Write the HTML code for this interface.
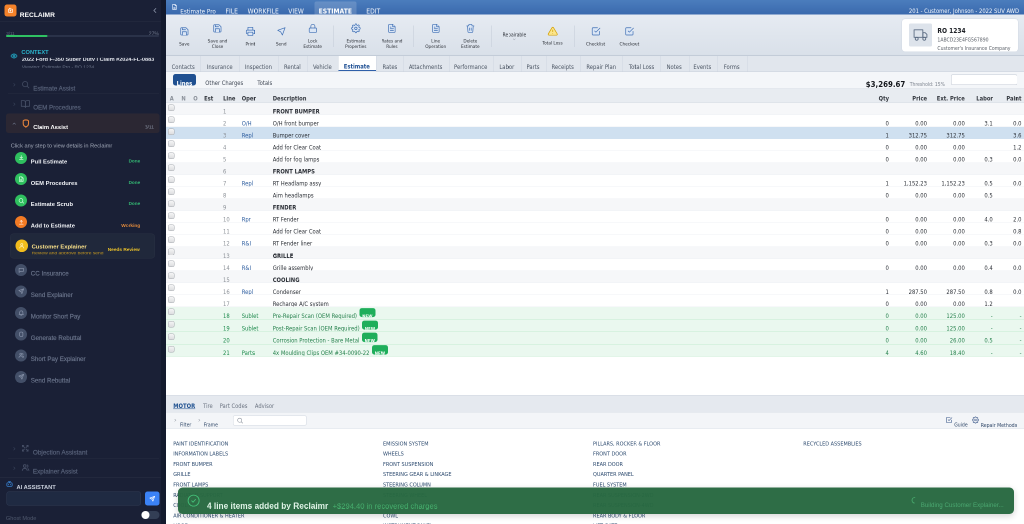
<!DOCTYPE html>
<html lang='en'>
<head>
<meta charset='utf-8'>
<title>Reclaimr - Estimate Pro</title>
<style>
html,body{margin:0;padding:0;background:#fff;}
body{width:1024px;height:524px;overflow:hidden;position:relative;}
#stage{will-change:transform;position:absolute;left:0;top:0;width:2048px;height:1048px;transform:scale(.5);transform-origin:0 0;overflow:hidden;background:#fff;font-family:"DejaVu Sans Condensed","DejaVu Sans",sans-serif;}
.b{position:absolute;box-sizing:border-box;}
.t{position:absolute;line-height:1;white-space:nowrap;transform:translateY(-50%);}
.t.r{transform:translate(-100%,-50%);}
.t.c{transform:translate(-50%,-50%);}
.rw{position:absolute;left:332px;right:0;overflow:hidden;box-sizing:border-box;border-bottom:1px solid #eef0f4;background:#fff;font-size:11.7px;color:#2b2f36;}
.rw.hd{background:#f6f7f9;}
.rw.sel{background:#cfe0f0;border-bottom-color:#cfe0f0;}
.rw.nw{background:#eaf8ef;border-bottom-color:#c4ebd1;color:#25804c;}
.rw .c{position:absolute;top:18.6px;line-height:1;white-space:nowrap;transform:translateY(-50%);}
.rw .ln{left:114px;color:#8b9097;}
.rw.nw .ln,.rw.nw .op{color:#1d8a4c;}
.rw .op{left:151.400px;color:#2c5c9e;}
.rw .ds{left:213.400px;}
.rw .v{transform:translate(-100%,-50%);}
.rw .q{left:1445.600px}.rw .p{left:1522px}.rw .e{left:1597.600px}.rw .l{left:1653.400px}.rw .pt{left:1711px}
.cb{position:absolute;left:4px;top:3px;margin:0;width:13px;height:13px;-webkit-appearance:none;appearance:none;border:1px solid #a4a8ae;border-radius:3.500px;background:linear-gradient(#f4f4f5,#dcdddf);box-sizing:border-box;}
.nb{display:inline-block;position:relative;vertical-align:top;font-style:normal;width:31.600px;height:18.600px;margin-left:5px;margin-top:-11px;border-radius:5px;background:#1fae5b;overflow:hidden;}
.nb u{position:absolute;left:50%;top:17px;transform:translate(-50%,-50%);text-decoration:none;color:#fff;font-weight:700;font-size:8.500px;line-height:1;letter-spacing:.2px;}
</style>
</head>
<body>
<div id='stage'>
<div id='sidebar'>
<div class='b' style='left:0px;top:0px;width:322.4px;height:1048px;background:#1a2036;'></div>
<div class='b' style='left:322.4px;top:0px;width:9.6px;height:1048px;background:#131a2d;'></div>
<div class='b' style='left:9px;top:9px;width:23.6px;height:23.6px;background:#f5822a;border-radius:5px;'></div>
<svg class='b' style='left:13.8px;top:13.8px;' width='14' height='14' viewBox='0 0 24 24' fill='none' stroke='#fff' stroke-width='2.2' stroke-linecap='round' stroke-linejoin='round'><rect x='5' y='7' width='14' height='12' rx='2.500'/><path d='M9 7V4h3'/><path d='M10.500 11v4l3.500-2z'/></svg>
<span class='t' style='left:39.6px;top:30.2px;font-size:13.3px;color:#ffffff;font-weight:700;font-family:"Liberation Sans", sans-serif;'>RECLAIMR</span>
<svg class='b' style='left:302.6px;top:14px;' width='14' height='14' viewBox='0 0 24 24' fill='none' stroke='#8f98ad' stroke-width='2.6' stroke-linecap='round' stroke-linejoin='round'><path d='M15 5l-7 7 7 7'/></svg>
<div class='b' style='left:0px;top:42px;width:322.4px;height:1px;background:rgba(255,255,255,.06);'></div>
<span class='t' style='left:12.4px;top:66.6px;font-size:9px;color:#5d667c;font-family:"Liberation Sans", sans-serif;'>3/11</span>
<span class='t r' style='left:317.6px;top:68.2px;font-size:10px;color:#717a8e;font-family:"Liberation Sans", sans-serif;'>27%</span>
<div class='b' style='left:12.4px;top:69.8px;width:305.2px;height:4.6px;background:#2a3249;border-radius:3px;'></div>
<div class='b' style='left:12.4px;top:69.8px;width:82.2px;height:4.6px;background:#2fc263;border-radius:3px;'></div>
<svg class='b' style='left:21px;top:105px;' width='14' height='14' viewBox='0 0 24 24' fill='none' stroke='#22b8d6' stroke-width='2.4' stroke-linecap='round' stroke-linejoin='round'><path d='M1.500 12s4-7 10.500-7 10.500 7 10.500 7-4 7-10.500 7S1.500 12 1.500 12z'/><circle cx='12' cy='12' r='3.500'/></svg>
<span class='t' style='left:42.8px;top:104.6px;font-size:11.4px;color:#2bb7cf;font-weight:700;font-family:"Liberation Sans", sans-serif;'>CONTEXT</span>
<span class='t' style='left:43.8px;top:119px;font-size:11.05px;color:#e6e9f0;font-weight:700;font-family:"Liberation Sans", sans-serif;clip-path:inset(20% 0 26% 0);'>2022 Ford F-350 Super Duty | Claim #2024-FL-0883</span>
<span class='t' style='left:43.8px;top:133.6px;font-size:9.9px;color:#6d768b;font-family:"Liberation Sans", sans-serif;clip-path:inset(16% 0 28% 0);'>Viewing: Estimate Pro - RO 1234</span>
<span class='t' style='left:66.4px;top:177.4px;font-size:12.4px;color:#58627a;font-family:"Liberation Sans", sans-serif;-webkit-text-stroke:.35px currentColor;'>Estimate Assist</span>
<svg class='b' style='left:41.6px;top:160.2px;' width='18' height='18' viewBox='0 0 24 24' fill='none' stroke='#454e65' stroke-width='2' stroke-linecap='round' stroke-linejoin='round'><circle cx='11' cy='11' r='7'/><path d='M21 21l-4.3-4.3'/></svg>
<svg class='b' style='left:24.3px;top:165.3px;' width='9' height='9' viewBox='0 0 24 24' fill='none' stroke='#39425a' stroke-width='3' stroke-linecap='round' stroke-linejoin='round'><path d='M9 5l7 7-7 7'/></svg>
<div class='b' style='left:16px;top:187.2px;width:302px;height:0.8px;background:rgba(255,255,255,.05);'></div>
<span class='t' style='left:66.4px;top:214.6px;font-size:12.4px;color:#58627a;font-family:"Liberation Sans", sans-serif;-webkit-text-stroke:.35px currentColor;'>OEM Procedures</span>
<svg class='b' style='left:40.9px;top:198.1px;' width='19.5' height='19.5' viewBox='0 0 24 24' fill='none' stroke='#454e65' stroke-width='2' stroke-linecap='round' stroke-linejoin='round'><path d='M2 4h6a4 4 0 0 1 4 4v13a3 3 0 0 0-3-3H2z'/><path d='M22 4h-6a4 4 0 0 0-4 4v13a3 3 0 0 1 3-3h7z'/></svg>
<svg class='b' style='left:24.3px;top:203.9px;' width='9' height='9' viewBox='0 0 24 24' fill='none' stroke='#39425a' stroke-width='3' stroke-linecap='round' stroke-linejoin='round'><path d='M9 5l7 7-7 7'/></svg>
<div class='b' style='left:12.4px;top:227.2px;width:306.8px;height:38.8px;background:#2b2733;border-radius:5px;'></div>
<span class='t' style='left:66.4px;top:254.4px;font-size:11.7px;color:#ffffff;font-weight:700;font-family:"Liberation Sans", sans-serif;'>Claim Assist</span>
<svg class='b' style='left:42.2px;top:237.2px;' width='19.5' height='19.5' viewBox='0 0 24 24' fill='none' stroke='#e9853b' stroke-width='2.6' stroke-linecap='round' stroke-linejoin='round'><path d='M12 3.500c3 0 5.500 1 6.500 2.200v6.800c0 4.200-2.700 6.800-6.500 8c-3.800-1.200-6.500-3.800-6.500-8V5.700c1-1.200 3.500-2.200 6.500-2.200z'/></svg>
<svg class='b' style='left:24.3px;top:243.1px;' width='9' height='9' viewBox='0 0 24 24' fill='none' stroke='#6b7388' stroke-width='3' stroke-linecap='round' stroke-linejoin='round'><path d='M5 15l7-7 7 7'/></svg>
<span class='t r' style='left:308px;top:253.6px;font-size:9.8px;color:#8d95a7;font-family:"Liberation Sans", sans-serif;'>3/11</span>
<span class='t' style='left:21.4px;top:291.8px;font-size:11.25px;color:#a3aab9;font-family:"Liberation Sans", sans-serif;'>Click any step to view details in Reclaimr</span>
<div class='b' style='left:30.2px;top:303.5px;width:24.2px;height:24.2px;background:#2fc05f;border-radius:50%;'></div>
<svg class='b' style='left:35.8px;top:309.1px;' width='13' height='13' viewBox='0 0 24 24' fill='none' stroke='#d9ffe6' stroke-width='2.4' stroke-linecap='round' stroke-linejoin='round'><path d='M12 4v10'/><path d='M7.500 10l4.500 4.500 4.500-4.500'/><path d='M5 19h14'/></svg>
<span class='t' style='left:61.6px;top:322.8px;font-size:11.6px;color:#f1f3f7;font-weight:700;font-family:"Liberation Sans", sans-serif;'>Pull Estimate</span>
<span class='t r' style='left:280.4px;top:322.8px;font-size:9.3px;color:#33b673;font-weight:700;font-family:"Liberation Sans", sans-serif;'>Done</span>
<div class='b' style='left:30.2px;top:346.3px;width:24.2px;height:24.2px;background:#2fc05f;border-radius:50%;'></div>
<svg class='b' style='left:35.8px;top:351.9px;' width='13' height='13' viewBox='0 0 24 24' fill='none' stroke='#d9ffe6' stroke-width='2.4' stroke-linecap='round' stroke-linejoin='round'><path d='M14 3H7a2 2 0 0 0-2 2v14a2 2 0 0 0 2 2h10a2 2 0 0 0 2-2V8z'/><path d='M14 3v5h5'/><path d='M9 13h6M9 17h6'/></svg>
<span class='t' style='left:61.6px;top:365.6px;font-size:11.6px;color:#f1f3f7;font-weight:700;font-family:"Liberation Sans", sans-serif;'>OEM Procedures</span>
<span class='t r' style='left:280.4px;top:365.6px;font-size:9.3px;color:#33b673;font-weight:700;font-family:"Liberation Sans", sans-serif;'>Done</span>
<div class='b' style='left:30.2px;top:389.1px;width:24.2px;height:24.2px;background:#2fc05f;border-radius:50%;'></div>
<svg class='b' style='left:35.8px;top:394.7px;' width='13' height='13' viewBox='0 0 24 24' fill='none' stroke='#d9ffe6' stroke-width='2.4' stroke-linecap='round' stroke-linejoin='round'><circle cx='11' cy='11' r='7'/><path d='M21 21l-4.3-4.3'/></svg>
<span class='t' style='left:61.6px;top:408.4px;font-size:11.6px;color:#f1f3f7;font-weight:700;font-family:"Liberation Sans", sans-serif;'>Estimate Scrub</span>
<span class='t r' style='left:280.4px;top:408.4px;font-size:9.3px;color:#33b673;font-weight:700;font-family:"Liberation Sans", sans-serif;'>Done</span>
<div class='b' style='left:30.2px;top:432.1px;width:24.2px;height:24.2px;background:#f27a24;border-radius:50%;'></div>
<svg class='b' style='left:35.8px;top:437.7px;' width='13' height='13' viewBox='0 0 24 24' fill='none' stroke='#ffe6d2' stroke-width='2.4' stroke-linecap='round' stroke-linejoin='round'><path d='M12 15V5'/><path d='M7.500 9.500L12 5l4.500 4.500'/><path d='M5 19h14'/></svg>
<span class='t' style='left:61.6px;top:451.4px;font-size:11.6px;color:#f1f3f7;font-weight:700;font-family:"Liberation Sans", sans-serif;'>Add to Estimate</span>
<span class='t r' style='left:280.4px;top:451.4px;font-size:9.5px;color:#e28a3c;font-weight:700;font-family:"Liberation Sans", sans-serif;'>Working</span>
<div class='b' style='left:20px;top:466.6px;width:289.6px;height:50.2px;background:#20283b;border-radius:7px;box-shadow:inset 0 0 0 1px rgba(255,255,255,.04);'></div>
<div class='b' style='left:31.4px;top:479.4px;width:24.6px;height:24.6px;background:#f2bd1d;border-radius:50%;'></div>
<svg class='b' style='left:37.2px;top:485.1px;' width='13' height='13' viewBox='0 0 24 24' fill='none' stroke='#fff3c4' stroke-width='2.4' stroke-linecap='round' stroke-linejoin='round'><circle cx='12' cy='8' r='4'/><path d='M4.500 20.500c.6-4 3.500-6 7.500-6s6.900 2 7.500 6'/></svg>
<span class='t' style='left:63.2px;top:492.6px;font-size:11.65px;color:#fbe28a;font-weight:700;font-family:"Liberation Sans", sans-serif;'>Customer Explainer</span>
<span class='t' style='left:63.2px;top:506.4px;font-size:9.8px;color:#c99a1f;font-family:"Liberation Sans", sans-serif;clip-path:inset(22% 0 30% 0);'>Review and approve before send</span>
<span class='t r' style='left:279.4px;top:499px;font-size:9.5px;color:#e9c02a;font-weight:700;font-family:"Liberation Sans", sans-serif;'>Needs Review</span>
<div class='b' style='left:30.2px;top:528.1px;width:24.2px;height:24.2px;background:#434f68;border-radius:50%;'></div>
<svg class='b' style='left:35.8px;top:533.7px;' width='13' height='13' viewBox='0 0 24 24' fill='none' stroke='#8994ab' stroke-width='2.4' stroke-linecap='round' stroke-linejoin='round'><path d='M4 5h16v11H9l-5 4z'/></svg>
<span class='t' style='left:61.6px;top:547.4px;font-size:12.4px;color:#69738a;font-family:"Liberation Sans", sans-serif;-webkit-text-stroke:.35px currentColor;'>CC Insurance</span>
<div class='b' style='left:30.2px;top:570.5px;width:24.2px;height:24.2px;background:#434f68;border-radius:50%;'></div>
<svg class='b' style='left:35.8px;top:576.1px;' width='13' height='13' viewBox='0 0 24 24' fill='none' stroke='#8994ab' stroke-width='2.4' stroke-linecap='round' stroke-linejoin='round'><path d='M21 3L10.500 13.500'/><path d='M21 3l-6.500 18-4-7.500L3 9.500z'/></svg>
<span class='t' style='left:61.6px;top:589.8px;font-size:12.4px;color:#69738a;font-family:"Liberation Sans", sans-serif;-webkit-text-stroke:.35px currentColor;'>Send Explainer</span>
<div class='b' style='left:30.2px;top:613.5px;width:24.2px;height:24.2px;background:#434f68;border-radius:50%;'></div>
<svg class='b' style='left:35.8px;top:619.1px;' width='13' height='13' viewBox='0 0 24 24' fill='none' stroke='#8994ab' stroke-width='2.4' stroke-linecap='round' stroke-linejoin='round'><path d='M6 16V11a6 6 0 0 1 12 0v5l2 2H4z'/><path d='M10 21h4'/></svg>
<span class='t' style='left:61.6px;top:632.8px;font-size:12.4px;color:#69738a;font-family:"Liberation Sans", sans-serif;-webkit-text-stroke:.35px currentColor;'>Monitor Short Pay</span>
<div class='b' style='left:30.2px;top:656.5px;width:24.2px;height:24.2px;background:#434f68;border-radius:50%;'></div>
<svg class='b' style='left:35.8px;top:662.1px;' width='13' height='13' viewBox='0 0 24 24' fill='none' stroke='#8994ab' stroke-width='2.4' stroke-linecap='round' stroke-linejoin='round'><rect x='6' y='4' width='12' height='16' rx='4'/></svg>
<span class='t' style='left:61.6px;top:675.8px;font-size:12.4px;color:#69738a;font-family:"Liberation Sans", sans-serif;-webkit-text-stroke:.35px currentColor;'>Generate Rebuttal</span>
<div class='b' style='left:30.2px;top:698.7px;width:24.2px;height:24.2px;background:#434f68;border-radius:50%;'></div>
<svg class='b' style='left:35.8px;top:704.3px;' width='13' height='13' viewBox='0 0 24 24' fill='none' stroke='#8994ab' stroke-width='2.4' stroke-linecap='round' stroke-linejoin='round'><circle cx='10' cy='8' r='3.500'/><path d='M3.500 20c.5-3.500 3-5.500 6.500-5.500s6 2 6.500 5.500'/><path d='M16.500 5a3.500 3.500 0 0 1 0 6.500M18.500 15c1.500.8 2.300 2.500 2.500 5'/></svg>
<span class='t' style='left:61.6px;top:718px;font-size:12.4px;color:#69738a;font-family:"Liberation Sans", sans-serif;-webkit-text-stroke:.35px currentColor;'>Short Pay Explainer</span>
<div class='b' style='left:30.2px;top:741.5px;width:24.2px;height:24.2px;background:#434f68;border-radius:50%;'></div>
<svg class='b' style='left:35.8px;top:747.1px;' width='13' height='13' viewBox='0 0 24 24' fill='none' stroke='#8994ab' stroke-width='2.4' stroke-linecap='round' stroke-linejoin='round'><path d='M21 3L10.500 13.500'/><path d='M21 3l-6.500 18-4-7.500L3 9.500z'/></svg>
<span class='t' style='left:61.6px;top:760.8px;font-size:12.4px;color:#69738a;font-family:"Liberation Sans", sans-serif;-webkit-text-stroke:.35px currentColor;'>Send Rebuttal</span>
<span class='t' style='left:65.8px;top:904.8px;font-size:12.8px;color:#58627a;font-family:"Liberation Sans", sans-serif;-webkit-text-stroke:.35px currentColor;'>Objection Assistant</span>
<svg class='b' style='left:42.3px;top:888.1px;' width='17' height='17' viewBox='0 0 24 24' fill='none' stroke='#485168' stroke-width='2.2' stroke-linecap='round' stroke-linejoin='round'><path d='M4 4l6 6M20 4l-6 6M4 20l6-6M20 20l-6-6'/><path d='M4 4h4M4 4v4M20 4h-4M20 4v4M4 20h4M4 20v-4M20 20h-4M20 20v-4'/></svg>
<svg class='b' style='left:23.9px;top:892.7px;' width='9' height='9' viewBox='0 0 24 24' fill='none' stroke='#39425a' stroke-width='3' stroke-linecap='round' stroke-linejoin='round'><path d='M9 5l7 7-7 7'/></svg>
<div class='b' style='left:16px;top:916.4px;width:302px;height:0.8px;background:rgba(255,255,255,.05);'></div>
<span class='t' style='left:65.8px;top:942.8px;font-size:12.7px;color:#58627a;font-family:"Liberation Sans", sans-serif;-webkit-text-stroke:.35px currentColor;'>Explainer Assist</span>
<svg class='b' style='left:41.8px;top:926.4px;' width='18' height='18' viewBox='0 0 24 24' fill='none' stroke='#485168' stroke-width='2.2' stroke-linecap='round' stroke-linejoin='round'><circle cx='10' cy='8' r='3.500'/><path d='M3.500 20c.5-3.500 3-5.500 6.500-5.500s6 2 6.500 5.500'/><path d='M16.500 5a3.500 3.500 0 0 1 0 6.500M18.500 15c1.500.8 2.300 2.500 2.500 5'/></svg>
<svg class='b' style='left:23.9px;top:931.5px;' width='9' height='9' viewBox='0 0 24 24' fill='none' stroke='#39425a' stroke-width='3' stroke-linecap='round' stroke-linejoin='round'><path d='M9 5l7 7-7 7'/></svg>
<div class='b' style='left:0px;top:953.6px;width:322.4px;height:1px;background:rgba(255,255,255,.07);'></div>
<svg class='b' style='left:11.8px;top:961.4px;' width='14' height='14' viewBox='0 0 24 24' fill='none' stroke='#3b8fe8' stroke-width='2.4' stroke-linecap='round' stroke-linejoin='round'><rect x='3' y='8' width='18' height='12' rx='3'/><path d='M12 8V4M8 4h8'/><path d='M8.500 13v2M15.500 13v2'/></svg>
<span class='t' style='left:33px;top:975.2px;font-size:11.5px;color:#c9cfdb;font-weight:700;font-family:"Liberation Sans", sans-serif;'>AI ASSISTANT</span>
<div class='b' style='left:12.6px;top:983.2px;width:269.4px;height:27.6px;background:#1f2a42;border-radius:5px;box-shadow:inset 0 0 0 1px #303b54;'></div>
<div class='b' style='left:290px;top:983.2px;width:28.8px;height:27.6px;background:#3b82f6;border-radius:5px;'></div>
<svg class='b' style='left:298.1px;top:990.7px;' width='13' height='13' viewBox='0 0 24 24' fill='none' stroke='#ffffff' stroke-width='2.4' stroke-linecap='round' stroke-linejoin='round'><path d='M21 3L10.500 13.500'/><path d='M21 3l-6.500 18-4-7.500L3 9.500z'/></svg>
<span class='t' style='left:11.8px;top:1037px;font-size:11.2px;color:#4f586d;font-family:"Liberation Sans", sans-serif;'>Ghost Mode</span>
<div class='b' style='left:282px;top:1021.6px;width:36.8px;height:16.2px;background:#333e55;border-radius:9px;'></div>
<div class='b' style='left:283.2px;top:1021.8px;width:16px;height:15.8px;background:#ffffff;border-radius:50%;'></div>
</div>
<div id='main'>
<div class='b' style='left:332px;top:0px;width:1716px;height:28.7px;background:linear-gradient(#4b7dbd,#3a69ad);'></div>
<svg class='b' style='left:341.6px;top:7.4px;' width='14' height='14' viewBox='0 0 24 24' fill='none' stroke='#e6eefb' stroke-width='2.2' stroke-linecap='round' stroke-linejoin='round'><path d='M14 3H7a2 2 0 0 0-2 2v14a2 2 0 0 0 2 2h10a2 2 0 0 0 2-2V8z'/><path d='M14 3v5h5'/><path d='M9 13h6M9 17h6'/></svg>
<span class='t' style='left:360.6px;top:23.4px;font-size:12.5px;color:#f3f7fd;font-family:"DejaVu Sans Condensed", "DejaVu Sans", sans-serif;'>Estimate Pro</span>
<span class='t' style='left:451px;top:23.4px;font-size:13.4px;color:#f3f7fd;font-family:"DejaVu Sans Condensed", "DejaVu Sans", sans-serif;'>FILE</span>
<span class='t' style='left:495.2px;top:23.4px;font-size:13.4px;color:#f3f7fd;font-family:"DejaVu Sans Condensed", "DejaVu Sans", sans-serif;'>WORKFILE</span>
<span class='t' style='left:576.4px;top:23.4px;font-size:13.4px;color:#f3f7fd;font-family:"DejaVu Sans Condensed", "DejaVu Sans", sans-serif;'>VIEW</span>
<div class='b' style='left:628.6px;top:2.6px;width:84.8px;height:26.1px;background:rgba(255,255,255,.16);border-radius:4px 4px 0 0;'></div>
<span class='t' style='left:637.2px;top:23.4px;font-size:13.5px;color:#ffffff;font-weight:700;font-family:"DejaVu Sans Condensed", "DejaVu Sans", sans-serif;'>ESTIMATE</span>
<span class='t' style='left:732.6px;top:23.4px;font-size:13.4px;color:#f3f7fd;font-family:"DejaVu Sans Condensed", "DejaVu Sans", sans-serif;'>EDIT</span>
<span class='t r' style='left:2038px;top:22.6px;font-size:11.7px;color:#f3f7fd;font-family:"DejaVu Sans Condensed", "DejaVu Sans", sans-serif;'>201 - Customer, Johnson - 2022 SUV AWD</span>
<div class='b' style='left:332px;top:28.7px;width:1716px;height:82.1px;background:linear-gradient(#e6ebf2,#d9e0e9);'></div>
<div class='b' style='left:332px;top:110.4px;width:1716px;height:1.2px;background:#c3ccd8;'></div>
<svg class='b' style='left:358.9px;top:52.9px;' width='19.5' height='19.5' viewBox='0 0 24 24' fill='#dbe6f5' stroke='#3f6fb4' stroke-width='1.7' stroke-linecap='round' stroke-linejoin='round'><path d='M19 21H5a2 2 0 0 1-2-2V5a2 2 0 0 1 2-2h11l5 5v11a2 2 0 0 1-2 2z'/><path d='M17 21v-8H7v8'/><path d='M7 3v5h8'/></svg>
<span class='t c' style='left:368.6px;top:87.8px;font-size:9.4px;color:#2b2f36;font-family:"DejaVu Sans Condensed", "DejaVu Sans", sans-serif;'>Save</span>
<svg class='b' style='left:425.2px;top:47.2px;' width='19.5' height='19.5' viewBox='0 0 24 24' fill='#dbe6f5' stroke='#3f6fb4' stroke-width='1.7' stroke-linecap='round' stroke-linejoin='round'><path d='M19 21H5a2 2 0 0 1-2-2V5a2 2 0 0 1 2-2h11l5 5v11a2 2 0 0 1-2 2z'/><path d='M17 21v-8H7v8'/><path d='M7 3v5h8'/></svg>
<span class='t c' style='left:435px;top:82px;font-size:9.4px;color:#2b2f36;font-family:"DejaVu Sans Condensed", "DejaVu Sans", sans-serif;'>Save and</span>
<span class='t c' style='left:435px;top:92.8px;font-size:9.4px;color:#2b2f36;font-family:"DejaVu Sans Condensed", "DejaVu Sans", sans-serif;'>Close</span>
<svg class='b' style='left:490.9px;top:52.9px;' width='19.5' height='19.5' viewBox='0 0 24 24' fill='#dbe6f5' stroke='#3f6fb4' stroke-width='1.7' stroke-linecap='round' stroke-linejoin='round'><path d='M6 9V2h12v7'/><path d='M6 18H4a2 2 0 0 1-2-2v-5a2 2 0 0 1 2-2h16a2 2 0 0 1 2 2v5a2 2 0 0 1-2 2h-2'/><rect x='6' y='14' width='12' height='8'/></svg>
<span class='t c' style='left:500.6px;top:87.8px;font-size:9.4px;color:#2b2f36;font-family:"DejaVu Sans Condensed", "DejaVu Sans", sans-serif;'>Print</span>
<svg class='b' style='left:552.6px;top:52.9px;' width='19.5' height='19.5' viewBox='0 0 24 24' fill='#dbe6f5' stroke='#3f6fb4' stroke-width='1.7' stroke-linecap='round' stroke-linejoin='round'><path d='M21 3L10.500 13.500'/><path d='M21 3l-6.500 18-4-7.500L3 9.500z'/></svg>
<span class='t c' style='left:562.4px;top:87.8px;font-size:9.4px;color:#2b2f36;font-family:"DejaVu Sans Condensed", "DejaVu Sans", sans-serif;'>Send</span>
<svg class='b' style='left:615.6px;top:47.2px;' width='19.5' height='19.5' viewBox='0 0 24 24' fill='#dbe6f5' stroke='#3f6fb4' stroke-width='1.7' stroke-linecap='round' stroke-linejoin='round'><rect x='3' y='11' width='18' height='11' rx='2'/><path d='M7 11V7a5 5 0 0 1 10 0v4' fill='none'/></svg>
<span class='t c' style='left:625.4px;top:82px;font-size:9.4px;color:#2b2f36;font-family:"DejaVu Sans Condensed", "DejaVu Sans", sans-serif;'>Lock</span>
<span class='t c' style='left:625.4px;top:92.8px;font-size:9.4px;color:#2b2f36;font-family:"DejaVu Sans Condensed", "DejaVu Sans", sans-serif;'>Estimate</span>
<svg class='b' style='left:701.9px;top:47.2px;' width='19.5' height='19.5' viewBox='0 0 24 24' fill='#dbe6f5' stroke='#3f6fb4' stroke-width='1.7' stroke-linecap='round' stroke-linejoin='round'><path d='M19.400 15a1.650 1.650 0 0 0 .33 1.820l.06.06a2 2 0 0 1-2.830 2.830l-.06-.06a1.650 1.650 0 0 0-1.820-.33 1.650 1.650 0 0 0-1 1.510V21a2 2 0 0 1-4 0v-.09A1.650 1.650 0 0 0 9 19.400a1.650 1.650 0 0 0-1.820.33l-.06.06a2 2 0 0 1-2.830-2.830l.06-.06a1.650 1.650 0 0 0 .33-1.820 1.650 1.650 0 0 0-1.510-1H3a2 2 0 0 1 0-4h.09A1.650 1.650 0 0 0 4.600 9a1.650 1.650 0 0 0-.33-1.820l-.06-.06a2 2 0 0 1 2.830-2.830l.06.06a1.650 1.650 0 0 0 1.820.33H9a1.650 1.650 0 0 0 1-1.510V3a2 2 0 0 1 4 0v.09a1.650 1.650 0 0 0 1 1.510 1.650 1.650 0 0 0 1.820-.33l.06-.06a2 2 0 0 1 2.830 2.830l-.06.06a1.650 1.650 0 0 0-.33 1.820V9a1.650 1.650 0 0 0 1.510 1H21a2 2 0 0 1 0 4h-.09a1.650 1.650 0 0 0-1.510 1z'/><circle cx='12' cy='12' r='3'/></svg>
<span class='t c' style='left:711.6px;top:82px;font-size:9.4px;color:#2b2f36;font-family:"DejaVu Sans Condensed", "DejaVu Sans", sans-serif;'>Estimate</span>
<span class='t c' style='left:711.6px;top:92.8px;font-size:9.4px;color:#2b2f36;font-family:"DejaVu Sans Condensed", "DejaVu Sans", sans-serif;'>Properties</span>
<svg class='b' style='left:774px;top:47.2px;' width='19.5' height='19.5' viewBox='0 0 24 24' fill='#dbe6f5' stroke='#3f6fb4' stroke-width='1.7' stroke-linecap='round' stroke-linejoin='round'><path d='M14 2H6a2 2 0 0 0-2 2v16a2 2 0 0 0 2 2h12a2 2 0 0 0 2-2V8z'/><path d='M14 2v6h6'/><path d='M16 13H8M16 17H8M10 9H8'/></svg>
<span class='t c' style='left:783.8px;top:82px;font-size:9.4px;color:#2b2f36;font-family:"DejaVu Sans Condensed", "DejaVu Sans", sans-serif;'>Rates and</span>
<span class='t c' style='left:783.8px;top:92.8px;font-size:9.4px;color:#2b2f36;font-family:"DejaVu Sans Condensed", "DejaVu Sans", sans-serif;'>Rules</span>
<svg class='b' style='left:861.6px;top:47.2px;' width='19.5' height='19.5' viewBox='0 0 24 24' fill='#dbe6f5' stroke='#3f6fb4' stroke-width='1.7' stroke-linecap='round' stroke-linejoin='round'><path d='M14 2H6a2 2 0 0 0-2 2v16a2 2 0 0 0 2 2h12a2 2 0 0 0 2-2V8z'/><path d='M14 2v6h6'/><path d='M16 13H8M16 17H8M10 9H8'/></svg>
<span class='t c' style='left:871.4px;top:82px;font-size:9.4px;color:#2b2f36;font-family:"DejaVu Sans Condensed", "DejaVu Sans", sans-serif;'>Line</span>
<span class='t c' style='left:871.4px;top:92.8px;font-size:9.4px;color:#2b2f36;font-family:"DejaVu Sans Condensed", "DejaVu Sans", sans-serif;'>Operation</span>
<svg class='b' style='left:930.9px;top:47.2px;' width='19.5' height='19.5' viewBox='0 0 24 24' fill='#dbe6f5' stroke='#3f6fb4' stroke-width='1.7' stroke-linecap='round' stroke-linejoin='round'><path d='M3 6h18'/><path d='M19 6l-1 14a2 2 0 0 1-2 2H8a2 2 0 0 1-2-2L5 6m3 0V4a2 2 0 0 1 2-2h4a2 2 0 0 1 2 2v2'/><path d='M10 11v6M14 11v6'/></svg>
<span class='t c' style='left:940.6px;top:82px;font-size:9.4px;color:#2b2f36;font-family:"DejaVu Sans Condensed", "DejaVu Sans", sans-serif;'>Delete</span>
<span class='t c' style='left:940.6px;top:92.8px;font-size:9.4px;color:#2b2f36;font-family:"DejaVu Sans Condensed", "DejaVu Sans", sans-serif;'>Estimate</span>
<div class='b' style='left:667px;top:50.8px;width:1px;height:43.2px;background:#c2cad6;'></div>
<div class='b' style='left:827px;top:50.8px;width:1px;height:43.2px;background:#c2cad6;'></div>
<div class='b' style='left:982px;top:50.8px;width:1px;height:43.2px;background:#c2cad6;'></div>
<div class='b' style='left:1148.6px;top:50.8px;width:1px;height:43.2px;background:#c2cad6;'></div>
<span class='t c' style='left:1028.8px;top:70.2px;font-size:9.8px;color:#2b2f36;font-family:"DejaVu Sans Condensed", "DejaVu Sans", sans-serif;'>Repairable</span>
<svg class='b' style='left:1025.3px;top:75.1px;' width='7' height='7' viewBox='0 0 24 24' fill='none' stroke='#6b7380' stroke-width='2.5' stroke-linecap='round' stroke-linejoin='round'><path d='M5 9l7 7 7-7'/></svg>
<svg class='b' style='left:1094.5px;top:52.1px;' width='21' height='21' viewBox='0 0 24 24' fill='#fbe58c' stroke='#d4a106' stroke-width='1.7' stroke-linecap='round' stroke-linejoin='round'><path d='M10.290 3.860L1.820 18a2 2 0 0 0 1.710 3h16.940a2 2 0 0 0 1.710-3L13.710 3.860a2 2 0 0 0-3.420 0z'/><path d='M12 9v4M12 17v.01'/></svg>
<span class='t c' style='left:1105px;top:85.8px;font-size:9.4px;color:#2b2f36;font-family:"DejaVu Sans Condensed", "DejaVu Sans", sans-serif;'>Total Loss</span>
<svg class='b' style='left:1181.5px;top:52.9px;' width='19.5' height='19.5' viewBox='0 0 24 24' fill='#dbe6f5' stroke='#3f6fb4' stroke-width='1.7' stroke-linecap='round' stroke-linejoin='round'><path d='M21 12v7a2 2 0 0 1-2 2H5a2 2 0 0 1-2-2V5a2 2 0 0 1 2-2h11' /><path d='M9 11l3 3L22 4' fill='none'/></svg>
<span class='t c' style='left:1191.2px;top:87.8px;font-size:9.4px;color:#2b2f36;font-family:"DejaVu Sans Condensed", "DejaVu Sans", sans-serif;'>Checklist</span>
<svg class='b' style='left:1249px;top:52.9px;' width='19.5' height='19.5' viewBox='0 0 24 24' fill='#dbe6f5' stroke='#3f6fb4' stroke-width='1.7' stroke-linecap='round' stroke-linejoin='round'><path d='M21 12v7a2 2 0 0 1-2 2H5a2 2 0 0 1-2-2V5a2 2 0 0 1 2-2h11' /><path d='M9 11l3 3L22 4' fill='none'/></svg>
<span class='t c' style='left:1258.8px;top:87.8px;font-size:9.4px;color:#2b2f36;font-family:"DejaVu Sans Condensed", "DejaVu Sans", sans-serif;'>Checkout</span>
<div class='b' style='left:1803.8px;top:37.6px;width:232.6px;height:65.2px;background:#ffffff;border-radius:6px;box-shadow:0 0 0 1px #d3dae4;overflow:hidden;'></div>
<div class='b' style='left:1818px;top:47px;width:46.2px;height:45.6px;background:#dde3eb;border-radius:3px;'></div>
<svg class='b' style='left:1827px;top:56.4px;' width='28' height='28' viewBox='0 0 24 24' fill='none' stroke='#5b6b82' stroke-width='1.5' stroke-linecap='round' stroke-linejoin='round'><rect x='1' y='3' width='15' height='13'/><path d='M16 8h4l3 3v5h-7z'/><circle cx='5.500' cy='18.500' r='2.500'/><circle cx='18.500' cy='18.500' r='2.500'/></svg>
<span class='t' style='left:1874.8px;top:62.4px;font-size:13.2px;color:#1c1f24;font-weight:700;font-family:"DejaVu Sans Condensed", "DejaVu Sans", sans-serif;'>RO 1234</span>
<span class='t' style='left:1874.8px;top:80.4px;font-size:10.2px;color:#5b6068;font-family:"DejaVu Sans Condensed", "DejaVu Sans", sans-serif;'>1ABCD23E4FG567890</span>
<span class='t' style='left:1874.8px;top:97px;font-size:10.2px;color:#5b6068;font-family:"DejaVu Sans Condensed", "DejaVu Sans", sans-serif;'>Customer&#x27;s Insurance Company</span>
<div class='b' style='left:332px;top:111.6px;width:1716px;height:31.6px;background:#e1e6ed;'></div>
<div class='b' style='left:332px;top:142.6px;width:1716px;height:1px;background:#c9d0db;'></div>
<div class='b' style='left:676px;top:111.6px;width:76px;height:31.6px;background:#ffffff;'></div>
<div class='b' style='left:676px;top:139.8px;width:76px;height:2.2px;background:#2f5fa9;'></div>
<div class='b' style='left:400.6px;top:111.6px;width:1px;height:31.6px;background:#cfd6e0;'></div>
<div class='b' style='left:477.6px;top:111.6px;width:1px;height:31.6px;background:#cfd6e0;'></div>
<div class='b' style='left:556.8px;top:111.6px;width:1px;height:31.6px;background:#cfd6e0;'></div>
<div class='b' style='left:614.8px;top:111.6px;width:1px;height:31.6px;background:#cfd6e0;'></div>
<div class='b' style='left:676px;top:111.6px;width:1px;height:31.6px;background:#cfd6e0;'></div>
<div class='b' style='left:752px;top:111.6px;width:1px;height:31.6px;background:#cfd6e0;'></div>
<div class='b' style='left:807.4px;top:111.6px;width:1px;height:31.6px;background:#cfd6e0;'></div>
<div class='b' style='left:897.6px;top:111.6px;width:1px;height:31.6px;background:#cfd6e0;'></div>
<div class='b' style='left:986px;top:111.6px;width:1px;height:31.6px;background:#cfd6e0;'></div>
<div class='b' style='left:1042px;top:111.6px;width:1px;height:31.6px;background:#cfd6e0;'></div>
<div class='b' style='left:1091.8px;top:111.6px;width:1px;height:31.6px;background:#cfd6e0;'></div>
<div class='b' style='left:1159.8px;top:111.6px;width:1px;height:31.6px;background:#cfd6e0;'></div>
<div class='b' style='left:1245px;top:111.6px;width:1px;height:31.6px;background:#cfd6e0;'></div>
<div class='b' style='left:1321.2px;top:111.6px;width:1px;height:31.6px;background:#cfd6e0;'></div>
<div class='b' style='left:1378.2px;top:111.6px;width:1px;height:31.6px;background:#cfd6e0;'></div>
<div class='b' style='left:1433.6px;top:111.6px;width:1px;height:31.6px;background:#cfd6e0;'></div>
<div class='b' style='left:1494px;top:111.6px;width:1px;height:31.6px;background:#cfd6e0;'></div>
<span class='t c' style='left:366.4px;top:135px;font-size:11.7px;color:#4b5563;font-family:"DejaVu Sans Condensed", "DejaVu Sans", sans-serif;'>Contacts</span>
<span class='t c' style='left:439.4px;top:135px;font-size:11.7px;color:#4b5563;font-family:"DejaVu Sans Condensed", "DejaVu Sans", sans-serif;'>Insurance</span>
<span class='t c' style='left:516.8px;top:135px;font-size:11.7px;color:#4b5563;font-family:"DejaVu Sans Condensed", "DejaVu Sans", sans-serif;'>Inspection</span>
<span class='t c' style='left:584.8px;top:135px;font-size:11.7px;color:#4b5563;font-family:"DejaVu Sans Condensed", "DejaVu Sans", sans-serif;'>Rental</span>
<span class='t c' style='left:644.8px;top:135px;font-size:11.7px;color:#4b5563;font-family:"DejaVu Sans Condensed", "DejaVu Sans", sans-serif;'>Vehicle</span>
<span class='t c' style='left:713.6px;top:133.6px;font-size:11.7px;color:#1e4f93;font-weight:700;font-family:"DejaVu Sans Condensed", "DejaVu Sans", sans-serif;'>Estimate</span>
<span class='t c' style='left:779.8px;top:135px;font-size:11.7px;color:#4b5563;font-family:"DejaVu Sans Condensed", "DejaVu Sans", sans-serif;'>Rates</span>
<span class='t c' style='left:851.2px;top:135px;font-size:11.7px;color:#4b5563;font-family:"DejaVu Sans Condensed", "DejaVu Sans", sans-serif;'>Attachments</span>
<span class='t c' style='left:941.4px;top:135px;font-size:11.7px;color:#4b5563;font-family:"DejaVu Sans Condensed", "DejaVu Sans", sans-serif;'>Performance</span>
<span class='t c' style='left:1013.6px;top:135px;font-size:11.7px;color:#4b5563;font-family:"DejaVu Sans Condensed", "DejaVu Sans", sans-serif;'>Labor</span>
<span class='t c' style='left:1066px;top:135px;font-size:11.7px;color:#4b5563;font-family:"DejaVu Sans Condensed", "DejaVu Sans", sans-serif;'>Parts</span>
<span class='t c' style='left:1125.4px;top:135px;font-size:11.7px;color:#4b5563;font-family:"DejaVu Sans Condensed", "DejaVu Sans", sans-serif;'>Receipts</span>
<span class='t c' style='left:1202.4px;top:135px;font-size:11.7px;color:#4b5563;font-family:"DejaVu Sans Condensed", "DejaVu Sans", sans-serif;'>Repair Plan</span>
<span class='t c' style='left:1283.2px;top:135px;font-size:11.7px;color:#4b5563;font-family:"DejaVu Sans Condensed", "DejaVu Sans", sans-serif;'>Total Loss</span>
<span class='t c' style='left:1348.4px;top:135px;font-size:11.7px;color:#4b5563;font-family:"DejaVu Sans Condensed", "DejaVu Sans", sans-serif;'>Notes</span>
<span class='t c' style='left:1404.6px;top:135px;font-size:11.7px;color:#4b5563;font-family:"DejaVu Sans Condensed", "DejaVu Sans", sans-serif;'>Events</span>
<span class='t c' style='left:1463.4px;top:135px;font-size:11.7px;color:#4b5563;font-family:"DejaVu Sans Condensed", "DejaVu Sans", sans-serif;'>Forms</span>
<div class='b' style='left:332px;top:143.6px;width:1716px;height:33.2px;background:#f4f6f9;'></div>
<div class='b' style='left:345.8px;top:148.2px;width:46.2px;height:23px;background:#1f5091;border-radius:5px;overflow:hidden;'><span class='t c' style='left:50%;top:20px;font-size:11.7px;color:#fff;font-weight:700;font-family:"DejaVu Sans Condensed", "DejaVu Sans", sans-serif'>Lines</span></div>
<span class='t' style='left:410.6px;top:167px;font-size:11.6px;color:#3f4754;font-family:"DejaVu Sans Condensed", "DejaVu Sans", sans-serif;'>Other Charges</span>
<span class='t' style='left:514.8px;top:167px;font-size:11.6px;color:#3f4754;font-family:"DejaVu Sans Condensed", "DejaVu Sans", sans-serif;'>Totals</span>
<span class='t r' style='left:1810.6px;top:169.8px;font-size:15.6px;color:#15181d;font-weight:700;font-family:"DejaVu Sans Condensed", "DejaVu Sans", sans-serif;'>$3,269.67</span>
<span class='t' style='left:1819.6px;top:169.2px;font-size:10px;color:#7b828d;font-family:"DejaVu Sans Condensed", "DejaVu Sans", sans-serif;'>Threshold: 15%</span>
<div class='b' style='left:1902px;top:149px;width:132px;height:20.6px;background:#ffffff;border-radius:3px;box-shadow:inset 0 0 0 1px #c2c9d4;'></div>
<div class='b' style='left:332px;top:176.8px;width:1716px;height:28.6px;background:#e8ecf1;'></div>
<div class='b' style='left:332px;top:176.4px;width:1716px;height:0.8px;background:#dfe4ea;'></div>
<div class='b' style='left:332px;top:205px;width:1716px;height:1px;background:#d5dbe3;'></div>
<span class='t c' style='left:343.6px;top:198px;font-size:11.6px;color:#8a9099;font-weight:700;font-family:"DejaVu Sans Condensed", "DejaVu Sans", sans-serif;'>A</span>
<span class='t c' style='left:367.2px;top:198px;font-size:11.6px;color:#8a9099;font-weight:700;font-family:"DejaVu Sans Condensed", "DejaVu Sans", sans-serif;'>N</span>
<span class='t c' style='left:391px;top:198px;font-size:11.6px;color:#8a9099;font-weight:700;font-family:"DejaVu Sans Condensed", "DejaVu Sans", sans-serif;'>O</span>
<span class='t' style='left:408.2px;top:198px;font-size:11.6px;color:#353940;font-weight:700;font-family:"DejaVu Sans Condensed", "DejaVu Sans", sans-serif;'>Est</span>
<span class='t' style='left:446.2px;top:198px;font-size:11.6px;color:#353940;font-weight:700;font-family:"DejaVu Sans Condensed", "DejaVu Sans", sans-serif;'>Line</span>
<span class='t' style='left:483.4px;top:198px;font-size:11.6px;color:#353940;font-weight:700;font-family:"DejaVu Sans Condensed", "DejaVu Sans", sans-serif;'>Oper</span>
<span class='t' style='left:545.4px;top:198px;font-size:11.6px;color:#353940;font-weight:700;font-family:"DejaVu Sans Condensed", "DejaVu Sans", sans-serif;'>Description</span>
<span class='t r' style='left:1778px;top:198px;font-size:11.6px;color:#353940;font-weight:700;font-family:"DejaVu Sans Condensed", "DejaVu Sans", sans-serif;'>Qty</span>
<span class='t r' style='left:1854.2px;top:198px;font-size:11.6px;color:#353940;font-weight:700;font-family:"DejaVu Sans Condensed", "DejaVu Sans", sans-serif;'>Price</span>
<span class='t r' style='left:1929.6px;top:198px;font-size:11.6px;color:#353940;font-weight:700;font-family:"DejaVu Sans Condensed", "DejaVu Sans", sans-serif;'>Ext. Price</span>
<span class='t r' style='left:1986px;top:198px;font-size:11.6px;color:#353940;font-weight:700;font-family:"DejaVu Sans Condensed", "DejaVu Sans", sans-serif;'>Labor</span>
<span class='t r' style='left:2043px;top:198px;font-size:11.6px;color:#353940;font-weight:700;font-family:"DejaVu Sans Condensed", "DejaVu Sans", sans-serif;'>Paint</span>
<div class='rw hd' style='top:205.5px;height:24px'><input type='checkbox' class='cb'><span class='c ln'>1</span><span class='c ds'><b>FRONT BUMPER</b></span></div><div class='rw' style='top:229.5px;height:24px'><input type='checkbox' class='cb'><span class='c ln'>2</span><span class='c op'>O/H</span><span class='c ds'>O/H front bumper</span><span class='c v q'>0</span><span class='c v p'>0.00</span><span class='c v e'>0.00</span><span class='c v l'>3.1</span><span class='c v pt'>0.0</span></div><div class='rw sel' style='top:253.6px;height:24px'><input type='checkbox' class='cb'><span class='c ln'>3</span><span class='c op'>Repl</span><span class='c ds'>Bumper cover</span><span class='c v q'>1</span><span class='c v p'>312.75</span><span class='c v e'>312.75</span><span class='c v pt'>3.6</span></div><div class='rw' style='top:277.6px;height:24px'><input type='checkbox' class='cb'><span class='c ln'>4</span><span class='c ds'>Add for Clear Coat</span><span class='c v q'>0</span><span class='c v p'>0.00</span><span class='c v e'>0.00</span><span class='c v pt'>1.2</span></div><div class='rw' style='top:301.7px;height:24px'><input type='checkbox' class='cb'><span class='c ln'>5</span><span class='c ds'>Add for fog lamps</span><span class='c v q'>0</span><span class='c v p'>0.00</span><span class='c v e'>0.00</span><span class='c v l'>0.3</span><span class='c v pt'>0.0</span></div><div class='rw hd' style='top:325.7px;height:24px'><input type='checkbox' class='cb'><span class='c ln'>6</span><span class='c ds'><b>FRONT LAMPS</b></span></div><div class='rw' style='top:349.7px;height:24px'><input type='checkbox' class='cb'><span class='c ln'>7</span><span class='c op'>Repl</span><span class='c ds'>RT Headlamp assy</span><span class='c v q'>1</span><span class='c v p'>1,152.23</span><span class='c v e'>1,152.23</span><span class='c v l'>0.5</span><span class='c v pt'>0.0</span></div><div class='rw' style='top:373.8px;height:24px'><input type='checkbox' class='cb'><span class='c ln'>8</span><span class='c ds'>Aim headlamps</span><span class='c v q'>0</span><span class='c v p'>0.00</span><span class='c v e'>0.00</span><span class='c v l'>0.5</span></div><div class='rw hd' style='top:397.8px;height:24px'><input type='checkbox' class='cb'><span class='c ln'>9</span><span class='c ds'><b>FENDER</b></span></div><div class='rw' style='top:421.9px;height:24px'><input type='checkbox' class='cb'><span class='c ln'>10</span><span class='c op'>Rpr</span><span class='c ds'>RT Fender</span><span class='c v q'>0</span><span class='c v p'>0.00</span><span class='c v e'>0.00</span><span class='c v l'>4.0</span><span class='c v pt'>2.0</span></div><div class='rw' style='top:445.9px;height:24px'><input type='checkbox' class='cb'><span class='c ln'>11</span><span class='c ds'>Add for Clear Coat</span><span class='c v q'>0</span><span class='c v p'>0.00</span><span class='c v e'>0.00</span><span class='c v pt'>0.8</span></div><div class='rw' style='top:469.9px;height:24px'><input type='checkbox' class='cb'><span class='c ln'>12</span><span class='c op'>R&amp;I</span><span class='c ds'>RT Fender liner</span><span class='c v q'>0</span><span class='c v p'>0.00</span><span class='c v e'>0.00</span><span class='c v l'>0.3</span><span class='c v pt'>0.0</span></div><div class='rw hd' style='top:494px;height:24px'><input type='checkbox' class='cb'><span class='c ln'>13</span><span class='c ds'><b>GRILLE</b></span></div><div class='rw' style='top:518px;height:24px'><input type='checkbox' class='cb'><span class='c ln'>14</span><span class='c op'>R&amp;I</span><span class='c ds'>Grille assembly</span><span class='c v q'>0</span><span class='c v p'>0.00</span><span class='c v e'>0.00</span><span class='c v l'>0.4</span><span class='c v pt'>0.0</span></div><div class='rw hd' style='top:542.1px;height:24px'><input type='checkbox' class='cb'><span class='c ln'>15</span><span class='c ds'><b>COOLING</b></span></div><div class='rw' style='top:566.1px;height:24px'><input type='checkbox' class='cb'><span class='c ln'>16</span><span class='c op'>Repl</span><span class='c ds'>Condenser</span><span class='c v q'>1</span><span class='c v p'>287.50</span><span class='c v e'>287.50</span><span class='c v l'>0.8</span><span class='c v pt'>0.0</span></div><div class='rw' style='top:590.1px;height:24px'><input type='checkbox' class='cb'><span class='c ln'>17</span><span class='c ds'>Recharge A/C system</span><span class='c v q'>0</span><span class='c v p'>0.00</span><span class='c v e'>0.00</span><span class='c v l'>1.2</span></div><div class='rw nw' style='top:614.2px;height:24.8px'><input type='checkbox' class='cb'><span class='c ln'>18</span><span class='c op'>Sublet</span><span class='c ds'>Pre-Repair Scan (OEM Required)<i class='nb'><u>NEW</u></i></span><span class='c v q'>0</span><span class='c v p'>0.00</span><span class='c v e'>125.00</span><span class='c v l'>-</span><span class='c v pt'>-</span></div><div class='rw nw' style='top:639px;height:24.8px'><input type='checkbox' class='cb'><span class='c ln'>19</span><span class='c op'>Sublet</span><span class='c ds'>Post-Repair Scan (OEM Required)<i class='nb'><u>NEW</u></i></span><span class='c v q'>0</span><span class='c v p'>0.00</span><span class='c v e'>125.00</span><span class='c v l'>-</span><span class='c v pt'>-</span></div><div class='rw nw' style='top:663.8px;height:24.8px'><input type='checkbox' class='cb'><span class='c ln'>20</span><span class='c ds'>Corrosion Protection - Bare Metal<i class='nb'><u>NEW</u></i></span><span class='c v q'>0</span><span class='c v p'>0.00</span><span class='c v e'>26.00</span><span class='c v l'>0.5</span><span class='c v pt'>-</span></div><div class='rw nw' style='top:688.6px;height:24.8px'><input type='checkbox' class='cb'><span class='c ln'>21</span><span class='c op'>Parts</span><span class='c ds'>4x Moulding Clips OEM #34-0090-22<i class='nb'><u>NEW</u></i></span><span class='c v q'>4</span><span class='c v p'>4.60</span><span class='c v e'>18.40</span><span class='c v l'>-</span><span class='c v pt'>-</span></div>
<div class='b' style='left:332px;top:790.6px;width:1716px;height:33.6px;background:#e5e9ef;'></div>
<div class='b' style='left:332px;top:790.2px;width:1716px;height:1px;background:#cfd5de;'></div>
<span class='t' style='left:346.4px;top:813px;font-size:11.8px;color:#1d4f8f;font-weight:700;font-family:"DejaVu Sans Condensed", "DejaVu Sans", sans-serif;text-decoration:underline;'>MOTOR</span>
<span class='t' style='left:406.2px;top:813px;font-size:11.5px;color:#6b7380;font-family:"DejaVu Sans Condensed", "DejaVu Sans", sans-serif;'>Tire</span>
<span class='t' style='left:439.4px;top:813px;font-size:11.5px;color:#6b7380;font-family:"DejaVu Sans Condensed", "DejaVu Sans", sans-serif;'>Part Codes</span>
<span class='t' style='left:509.8px;top:813px;font-size:11.5px;color:#6b7380;font-family:"DejaVu Sans Condensed", "DejaVu Sans", sans-serif;'>Advisor</span>
<div class='b' style='left:332px;top:824.2px;width:1716px;height:33.2px;background:#f3f5f8;'></div>
<div class='b' style='left:332px;top:823.8px;width:1716px;height:0.8px;background:#d9dee6;'></div>
<div class='b' style='left:332px;top:857px;width:1716px;height:1px;background:#dde2e9;'></div>
<svg class='b' style='left:347.3px;top:837.1px;' width='7' height='7' viewBox='0 0 24 24' fill='none' stroke='#5d6673' stroke-width='3' stroke-linecap='round' stroke-linejoin='round'><path d='M9 5l7 7-7 7'/></svg>
<span class='t' style='left:360px;top:849.8px;font-size:10.2px;color:#2d4566;font-family:"DejaVu Sans Condensed", "DejaVu Sans", sans-serif;'>Filter</span>
<svg class='b' style='left:394.9px;top:837.1px;' width='7' height='7' viewBox='0 0 24 24' fill='none' stroke='#5d6673' stroke-width='3' stroke-linecap='round' stroke-linejoin='round'><path d='M9 5l7 7-7 7'/></svg>
<span class='t' style='left:407.4px;top:849.8px;font-size:10.2px;color:#2d4566;font-family:"DejaVu Sans Condensed", "DejaVu Sans", sans-serif;'>Frame</span>
<div class='b' style='left:466px;top:830.8px;width:147.2px;height:20.2px;background:#ffffff;border-radius:3px;box-shadow:inset 0 0 0 1px #d2d8e1;'></div>
<svg class='b' style='left:473.4px;top:833.8px;' width='14' height='14' viewBox='0 0 24 24' fill='none' stroke='#8b929c' stroke-width='2' stroke-linecap='round' stroke-linejoin='round'><circle cx='11' cy='11' r='7'/><path d='M21 21l-4.3-4.3'/></svg>
<svg class='b' style='left:1891px;top:833.4px;' width='14' height='14' viewBox='0 0 24 24' fill='none' stroke='#3a5788' stroke-width='2' stroke-linecap='round' stroke-linejoin='round'><path d='M21 12v7a2 2 0 0 1-2 2H5a2 2 0 0 1-2-2V5a2 2 0 0 1 2-2h11' /><path d='M9 11l3 3L22 4' fill='none'/></svg>
<span class='t' style='left:1908.4px;top:849.8px;font-size:10.2px;color:#2d4566;font-family:"DejaVu Sans Condensed", "DejaVu Sans", sans-serif;'>Guide</span>
<svg class='b' style='left:1944px;top:833.4px;' width='14' height='14' viewBox='0 0 24 24' fill='none' stroke='#3a5788' stroke-width='2' stroke-linecap='round' stroke-linejoin='round'><path d='M19.400 15a1.650 1.650 0 0 0 .33 1.820l.06.06a2 2 0 0 1-2.830 2.830l-.06-.06a1.650 1.650 0 0 0-1.820-.33 1.650 1.650 0 0 0-1 1.510V21a2 2 0 0 1-4 0v-.09A1.650 1.650 0 0 0 9 19.400a1.650 1.650 0 0 0-1.820.33l-.06.06a2 2 0 0 1-2.830-2.830l.06-.06a1.650 1.650 0 0 0 .33-1.820 1.650 1.650 0 0 0-1.510-1H3a2 2 0 0 1 0-4h.09A1.650 1.650 0 0 0 4.600 9a1.650 1.650 0 0 0-.33-1.820l-.06-.06a2 2 0 0 1 2.830-2.830l.06.06a1.650 1.650 0 0 0 1.820.33H9a1.650 1.650 0 0 0 1-1.510V3a2 2 0 0 1 4 0v.09a1.650 1.650 0 0 0 1 1.510 1.650 1.650 0 0 0 1.820-.33l.06-.06a2 2 0 0 1 2.830 2.830l-.06.06a1.650 1.650 0 0 0-.33 1.820V9a1.650 1.650 0 0 0 1.510 1H21a2 2 0 0 1 0 4h-.09a1.650 1.650 0 0 0-1.510 1z'/><circle cx='12' cy='12' r='3'/></svg>
<span class='t' style='left:1961.4px;top:849.8px;font-size:10.4px;color:#2d4566;font-family:"DejaVu Sans Condensed", "DejaVu Sans", sans-serif;'>Repair Methods</span>
<div class='b' style='left:332px;top:858px;width:1716px;height:190px;background:#ffffff;'></div>
<span class='t' style='left:346.4px;top:886.6px;font-size:11px;color:#2a486d;font-family:"DejaVu Sans Condensed", "DejaVu Sans", sans-serif;'>PAINT IDENTIFICATION</span>
<span class='t' style='left:346.4px;top:907.2px;font-size:11px;color:#2a486d;font-family:"DejaVu Sans Condensed", "DejaVu Sans", sans-serif;'>INFORMATION LABELS</span>
<span class='t' style='left:346.4px;top:927.8px;font-size:11px;color:#2a486d;font-family:"DejaVu Sans Condensed", "DejaVu Sans", sans-serif;'>FRONT BUMPER</span>
<span class='t' style='left:346.4px;top:948.4px;font-size:11px;color:#2a486d;font-family:"DejaVu Sans Condensed", "DejaVu Sans", sans-serif;'>GRILLE</span>
<span class='t' style='left:346.4px;top:969px;font-size:11px;color:#2a486d;font-family:"DejaVu Sans Condensed", "DejaVu Sans", sans-serif;'>FRONT LAMPS</span>
<span class='t' style='left:346.4px;top:989.6px;font-size:11px;color:#2a486d;font-family:"DejaVu Sans Condensed", "DejaVu Sans", sans-serif;'>RADIATOR SUPPORT</span>
<span class='t' style='left:346.4px;top:1010.2px;font-size:11px;color:#2a486d;font-family:"DejaVu Sans Condensed", "DejaVu Sans", sans-serif;'>COOLING</span>
<span class='t' style='left:346.4px;top:1030.8px;font-size:11px;color:#2a486d;font-family:"DejaVu Sans Condensed", "DejaVu Sans", sans-serif;'>AIR CONDITIONER &amp; HEATER</span>
<span class='t' style='left:346.4px;top:1051.4px;font-size:11px;color:#2a486d;font-family:"DejaVu Sans Condensed", "DejaVu Sans", sans-serif;'>HOOD</span>
<span class='t' style='left:766px;top:886.6px;font-size:11px;color:#2a486d;font-family:"DejaVu Sans Condensed", "DejaVu Sans", sans-serif;'>EMISSION SYSTEM</span>
<span class='t' style='left:766px;top:907.2px;font-size:11px;color:#2a486d;font-family:"DejaVu Sans Condensed", "DejaVu Sans", sans-serif;'>WHEELS</span>
<span class='t' style='left:766px;top:927.8px;font-size:11px;color:#2a486d;font-family:"DejaVu Sans Condensed", "DejaVu Sans", sans-serif;'>FRONT SUSPENSION</span>
<span class='t' style='left:766px;top:948.4px;font-size:11px;color:#2a486d;font-family:"DejaVu Sans Condensed", "DejaVu Sans", sans-serif;'>STEERING GEAR &amp; LINKAGE</span>
<span class='t' style='left:766px;top:969px;font-size:11px;color:#2a486d;font-family:"DejaVu Sans Condensed", "DejaVu Sans", sans-serif;'>STEERING COLUMN</span>
<span class='t' style='left:766px;top:989.6px;font-size:11px;color:#2a486d;font-family:"DejaVu Sans Condensed", "DejaVu Sans", sans-serif;'>STEERING WHEEL</span>
<span class='t' style='left:766px;top:1010.2px;font-size:11px;color:#2a486d;font-family:"DejaVu Sans Condensed", "DejaVu Sans", sans-serif;'>FRONT DRIVE AXLE</span>
<span class='t' style='left:766px;top:1030.8px;font-size:11px;color:#2a486d;font-family:"DejaVu Sans Condensed", "DejaVu Sans", sans-serif;'>COWL</span>
<span class='t' style='left:766px;top:1051.4px;font-size:11px;color:#2a486d;font-family:"DejaVu Sans Condensed", "DejaVu Sans", sans-serif;'>INSTRUMENT PANEL</span>
<span class='t' style='left:1186px;top:886.6px;font-size:11px;color:#2a486d;font-family:"DejaVu Sans Condensed", "DejaVu Sans", sans-serif;'>PILLARS, ROCKER &amp; FLOOR</span>
<span class='t' style='left:1186px;top:907.2px;font-size:11px;color:#2a486d;font-family:"DejaVu Sans Condensed", "DejaVu Sans", sans-serif;'>FRONT DOOR</span>
<span class='t' style='left:1186px;top:927.8px;font-size:11px;color:#2a486d;font-family:"DejaVu Sans Condensed", "DejaVu Sans", sans-serif;'>REAR DOOR</span>
<span class='t' style='left:1186px;top:948.4px;font-size:11px;color:#2a486d;font-family:"DejaVu Sans Condensed", "DejaVu Sans", sans-serif;'>QUARTER PANEL</span>
<span class='t' style='left:1186px;top:969px;font-size:11px;color:#2a486d;font-family:"DejaVu Sans Condensed", "DejaVu Sans", sans-serif;'>FUEL SYSTEM</span>
<span class='t' style='left:1186px;top:989.6px;font-size:11px;color:#2a486d;font-family:"DejaVu Sans Condensed", "DejaVu Sans", sans-serif;'>REAR SUSPENSION-2WD</span>
<span class='t' style='left:1186px;top:1010.2px;font-size:11px;color:#2a486d;font-family:"DejaVu Sans Condensed", "DejaVu Sans", sans-serif;'>REAR SUSPENSION-4WD</span>
<span class='t' style='left:1186px;top:1030.8px;font-size:11px;color:#2a486d;font-family:"DejaVu Sans Condensed", "DejaVu Sans", sans-serif;'>REAR BODY &amp; FLOOR</span>
<span class='t' style='left:1186px;top:1051.4px;font-size:11px;color:#2a486d;font-family:"DejaVu Sans Condensed", "DejaVu Sans", sans-serif;'>LIFT GATE</span>
<span class='t' style='left:1606.6px;top:886.6px;font-size:11px;color:#2a486d;font-family:"DejaVu Sans Condensed", "DejaVu Sans", sans-serif;'>RECYCLED ASSEMBLIES</span>
<div class='b' style='left:355.8px;top:974.6px;width:1672.6px;height:53.8px;background:rgba(38,104,63,.965);border-radius:9px;box-shadow:0 4px 14px rgba(0,0,0,.18);'></div>
<svg class='b' style='left:373.6px;top:988.1px;' width='26.5' height='26.5' viewBox='0 0 24 24' fill='none' stroke='#45c47a' stroke-width='1.5' stroke-linecap='round' stroke-linejoin='round'><circle cx='12' cy='12' r='10'/><path d='M8.500 12.300l2.500 2.500 4.500-5'/></svg>
<span class='t' style='left:414px;top:1012.4px;font-size:16.6px;color:#dff3e6;font-weight:700;font-family:"Liberation Sans", sans-serif;'>4 line items added by Reclaimr</span>
<span class='t' style='left:665.2px;top:1012.4px;font-size:15.2px;color:#45ad6c;font-family:"Liberation Sans", sans-serif;'>+$294.40 in recovered charges</span>
<svg class='b' style='left:1821.1px;top:992.9px;' width='15' height='15' viewBox='0 0 24 24' fill='none' stroke='#49ad6f' stroke-width='2.6' stroke-linecap='round' stroke-linejoin='round'><path d='M14 3.200a9 9 0 0 0 -2 17.800' /></svg>
<span class='t' style='left:1841.4px;top:1009.8px;font-size:12.4px;color:#4aa770;font-family:"Liberation Sans", sans-serif;'>Building Customer Explainer...</span>
</div>
</div>
</body>
</html>
